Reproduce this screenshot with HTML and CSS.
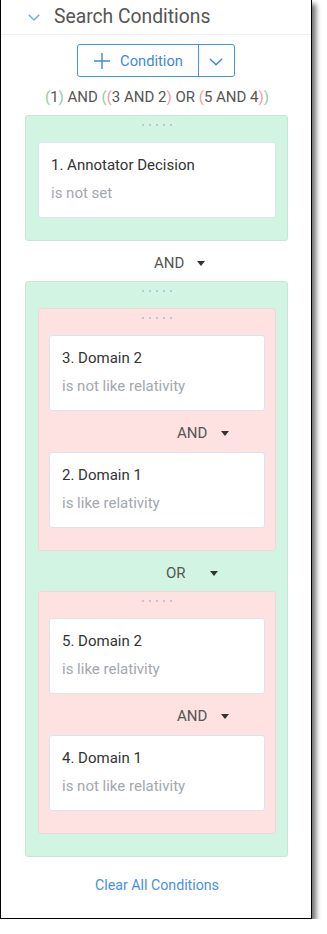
FILE: index.html
```html
<!DOCTYPE html>
<html>
<head>
<meta charset="utf-8">
<link rel="stylesheet" href="styles.css">
</head>
<body>
<div class="frame">
  <div class="header">
    <svg class="hdr-chev" width="12" height="7" viewBox="0 0 12 7"><path d="M0.7 0.7 L6 6 L11.3 0.7" fill="none" stroke="#6fa8e6" stroke-width="1.4"/></svg>
    <span class="hdr-title">Search Conditions</span>
  </div>
  <div class="btn-row">
    <div class="split-btn">
      <div class="btn-main">
        <svg width="16" height="16" viewBox="0 0 16 16"><path d="M8 0 V16 M0 8 H16" stroke="#3f88dc" stroke-width="1.4" fill="none"/></svg>
        <span>Condition</span>
      </div>
      <div class="btn-drop">
        <svg width="14" height="8" viewBox="0 0 14 8"><path d="M0.8 0.8 L7 6.8 L13.2 0.8" fill="none" stroke="#3f88dc" stroke-width="1.4"/></svg>
      </div>
    </div>
  </div>
  <div class="formula"><span class="pg">(</span>1<span class="pg">)</span> AND <span class="pg">(</span><span class="pp">(</span>3 AND 2<span class="pp">)</span> OR <span class="pp">(</span>5 AND 4<span class="pp">)</span><span class="pg">)</span></div>

  <div class="group green">
    <div class="dots"><i></i><i></i><i></i><i></i><i></i></div>
    <div class="card">
      <div class="c-title">1. Annotator Decision</div>
      <div class="c-sub">is not set</div>
    </div>
  </div>

  <div class="op op-top"><span class="op-label">AND</span><span class="caret"></span></div>

  <div class="group green">
    <div class="dots"><i></i><i></i><i></i><i></i><i></i></div>
    <div class="group pink">
      <div class="dots"><i></i><i></i><i></i><i></i><i></i></div>
      <div class="card">
        <div class="c-title">3. Domain 2</div>
        <div class="c-sub">is not like relativity</div>
      </div>
      <div class="op op-pink"><span class="op-label">AND</span><span class="caret"></span></div>
      <div class="card">
        <div class="c-title">2. Domain 1</div>
        <div class="c-sub">is like relativity</div>
      </div>
    </div>
    <div class="op op-or"><span class="op-label">OR</span><span class="caret"></span></div>
    <div class="group pink">
      <div class="dots"><i></i><i></i><i></i><i></i><i></i></div>
      <div class="card">
        <div class="c-title">5. Domain 2</div>
        <div class="c-sub">is like relativity</div>
      </div>
      <div class="op op-pink"><span class="op-label">AND</span><span class="caret"></span></div>
      <div class="card">
        <div class="c-title">4. Domain 1</div>
        <div class="c-sub">is not like relativity</div>
      </div>
    </div>
  </div>

  <div class="clear">Clear All Conditions</div>
</div>
</body>
</html>
```
FILE: styles.css
```css
html, body {
  margin: 0;
  padding: 0;
  background: #ffffff;
}
body {
  font-family: Roboto, "Liberation Sans", Arial, sans-serif;
  color: #333;
}
.frame {
  width: 310px;
  height: 918px;
  border-left: 1px solid #000;
  border-right: 1px solid #000;
  border-bottom: 1px solid #000;
  box-shadow: 4px 4px 5px rgba(0,0,0,0.55);
  background: #fff;
  box-sizing: content-box;
  overflow: hidden;
}
.header {
  height: 34px;
  border-bottom: 1px solid #eaf0f7;
  display: flex;
  align-items: center;
  padding-left: 27px;
}
.hdr-chev {
  display: block;
  margin-top: 1px;
}
.hdr-title {
  font-size: 19.3px;
  color: #555;
  margin-left: 14px;
  line-height: 22px;
}
.btn-row {
  display: flex;
  justify-content: center;
  margin-top: 9px;
}
.split-btn {
  display: flex;
  height: 31px;
  border: 1px solid #4a90e2;
  border-radius: 3px;
}
.btn-main {
  display: flex;
  align-items: center;
  padding: 0 15px 0 16px;
  border-right: 1px solid #4a90e2;
  font-size: 14.7px;
  color: #3f88dc;
}
.btn-main span {
  margin-left: 10px;
}
.btn-drop {
  width: 35px;
  display: flex;
  align-items: center;
  justify-content: center;
}
.btn-drop svg {
  margin-top: 3px;
}
.formula {
  text-align: center;
  font-size: 15px;
  line-height: 18px;
  color: #555;
  margin-top: 11px;
  margin-bottom: 9px;
  padding-left: 2px;
}
.pg { color: #93c9a4; }
.pp { color: #e7a0a0; }
.group {
  border: 1px solid;
  border-radius: 3px;
  padding: 0 11px 22px 12px;
}
.green {
  background: #d2f5e3;
  border-color: #c7e6db;
  margin: 0 23px 0 24px;
}
.pink {
  background: #fee1e1;
  border-color: #f3d6da;
  margin: 0;
  padding: 0 10px 22px 10px;
}
.dots {
  display: flex;
  justify-content: center;
  gap: 5px;
  padding-top: 8px;
  height: 2px;
  margin-bottom: 16px;
}
.dots i {
  display: block;
  width: 2px;
  height: 2px;
  background: #a9bdd3;
  border-radius: 1px;
}
.card {
  background: #fff;
  border: 1px solid #dbe3ee;
  border-radius: 3px;
  padding: 13px 12px 15px 12px;
}
.c-title {
  font-size: 15px;
  line-height: 18px;
  color: #333;
}
.c-sub {
  font-size: 15px;
  line-height: 18px;
  color: #a3a7ae;
  margin-top: 10px;
}
.op {
  display: flex;
  align-items: center;
  font-size: 15px;
  color: #555;
  line-height: 18px;
  box-sizing: border-box;
}
.op-label {
  display: inline-block;
}
.caret {
  display: inline-block;
  width: 0;
  height: 0;
  border-left: 4.5px solid transparent;
  border-right: 4.5px solid transparent;
  border-top: 5px solid #333;
}
.op-top {
  height: 40px;
  padding-left: 153px;
  padding-top: 4px;
}
.op-top .caret { margin-left: 13px; }
.op-pink {
  height: 41px;
  padding-left: 128px;
  padding-top: 3px;
}
.op-pink .caret { margin-left: 14px; }
.op-or {
  height: 40px;
  padding-left: 128px;
  padding-top: 4px;
}
.op-or .caret { margin-left: 24px; }
.clear {
  text-align: center;
  font-size: 14.2px;
  color: #4a90e2;
  margin-top: 19px;
  line-height: 18px;
  padding-left: 2px;
}
```
